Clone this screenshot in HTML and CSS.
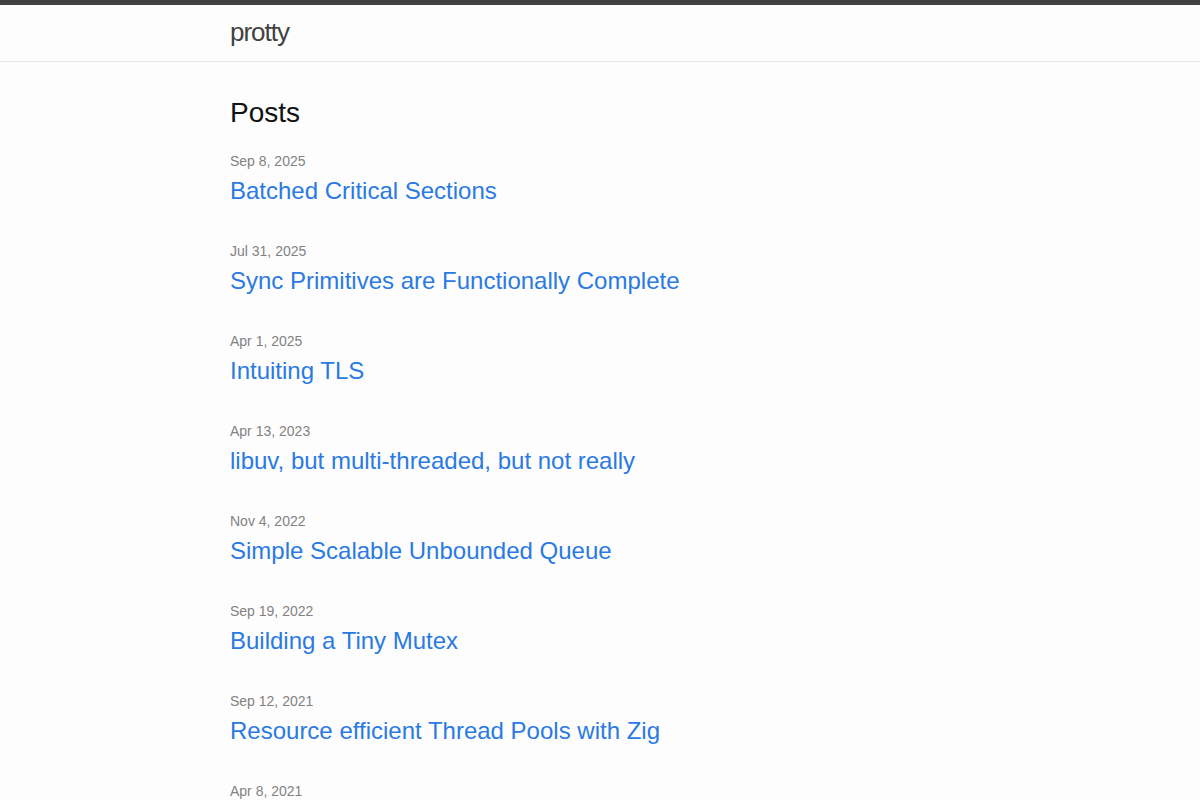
FILE: index.html
```html
<!DOCTYPE html>
<html lang="en">
<head>
<meta charset="utf-8">
<title>protty</title>
<link rel="stylesheet" href="styles.css">
</head>
<body>
<header class="site-header">
  <div class="wrapper">
    <a class="site-title" href="#">protty</a>
  </div>
</header>
<main class="page-content">
  <div class="wrapper">
    <h2 class="post-list-heading">Posts</h2>
    <ul class="post-list">
      <li><span class="post-meta">Sep 8, 2025</span><h3><a class="post-link" href="#">Batched Critical Sections</a></h3></li>
      <li><span class="post-meta">Jul 31, 2025</span><h3><a class="post-link" href="#">Sync Primitives are Functionally Complete</a></h3></li>
      <li><span class="post-meta">Apr 1, 2025</span><h3><a class="post-link" href="#">Intuiting TLS</a></h3></li>
      <li><span class="post-meta">Apr 13, 2023</span><h3><a class="post-link" href="#">libuv, but multi-threaded, but not really</a></h3></li>
      <li><span class="post-meta">Nov 4, 2022</span><h3><a class="post-link" href="#">Simple Scalable Unbounded Queue</a></h3></li>
      <li><span class="post-meta">Sep 19, 2022</span><h3><a class="post-link" href="#">Building a Tiny Mutex</a></h3></li>
      <li><span class="post-meta">Sep 12, 2021</span><h3><a class="post-link" href="#">Resource efficient Thread Pools with Zig</a></h3></li>
      <li><span class="post-meta">Apr 8, 2021</span></li>
    </ul>
  </div>
</main>
</body>
</html>
```

FILE: styles.css
```css
* {
  box-sizing: border-box;
}

html, body {
  margin: 0;
  padding: 0;
}

body {
  background: #fdfdfd;
  color: #111111;
  font-family: "Liberation Sans", Arial, sans-serif;
  font-size: 16px;
  line-height: 1.5;
}

.wrapper {
  max-width: 800px;
  margin: 0 auto;
  padding: 0 30px;
}

.site-header {
  box-sizing: content-box;
  border-top: 5px solid #424242;
  border-bottom: 1px solid #e8e8e8;
  height: 56px;
}

.site-title {
  display: block;
  font-size: 26px;
  font-weight: 300;
  line-height: 54px;
  letter-spacing: -1px;
  color: #424242;
  text-decoration: none;
}

.page-content {
  padding: 30px 0;
}

.post-list-heading {
  margin: 0 0 17px;
  font-size: 28px;
  font-weight: 400;
  line-height: 42px;
}

.post-list {
  list-style: none;
  margin: 0;
  padding: 0;
}

.post-list li {
  margin-bottom: 32px;
}

.post-meta {
  display: block;
  margin-bottom: 1px;
  font-size: 14px;
  line-height: 21px;
  color: #828282;
}

.post-list h3 {
  margin: 0;
  font-weight: 400;
}

.post-link {
  display: block;
  font-size: 24px;
  line-height: 36px;
  color: #2a7ae2;
  text-decoration: none;
}
```
